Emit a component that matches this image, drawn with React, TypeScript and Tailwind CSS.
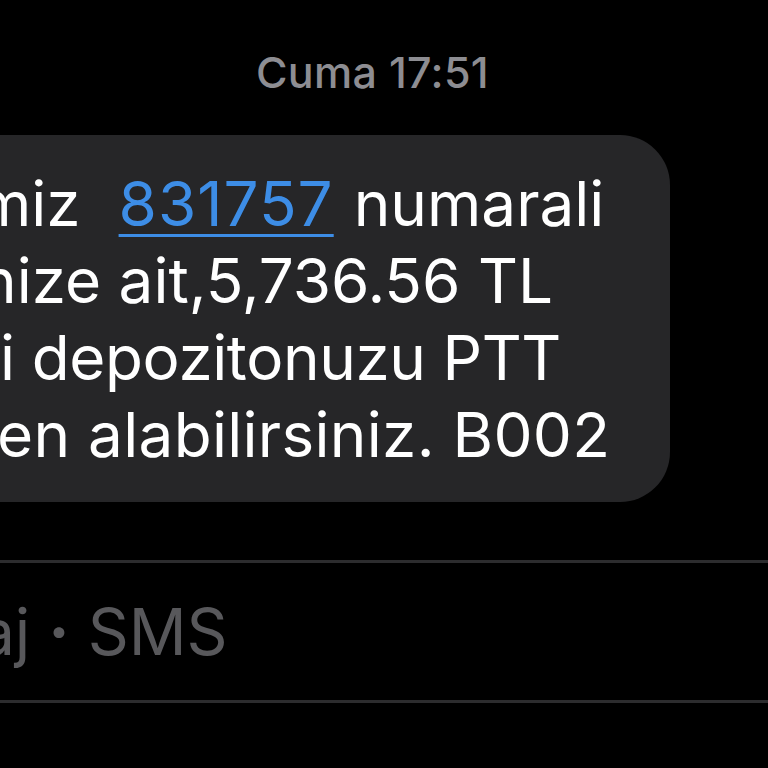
export default function App() {
  return (
    <div className="relative h-[768px] w-[768px] overflow-hidden bg-black font-['Inter','Liberation_Sans',sans-serif]">
      <div className="pt-[44px] pl-[256px] text-[43px] font-medium leading-[56px] tracking-[0.3px] text-[#8d8d92]">
        Cuma 17:51
      </div>

      <div className="mt-[35px] -ml-[60px] flex h-[367px] w-[730px] flex-col justify-center rounded-[50px] bg-[#262628] text-[62px] leading-[77px] text-white">
        <div className="ml-[37px] whitespace-nowrap">
          miz
          <span className="ml-[38px] tracking-[1px] text-[#3d8de6] underline decoration-[3px] underline-offset-[8px]">
            831757
          </span>
          <span className="ml-[20px]">numarali</span>
        </div>
        <div className="ml-[40px] whitespace-nowrap">nize ait,5,736.56 TL</div>
        <div className="ml-[60px] whitespace-nowrap tracking-[-0.4px]">i depozitonuzu PTT</div>
        <div className="ml-[57px] whitespace-nowrap tracking-[0.3px]">en alabilirsiniz. B002</div>
      </div>

      <div className="mt-[58px] flex h-[143px] items-center border-y-[3px] border-[#2c2c2e]">
        <div className="-ml-[150px] whitespace-nowrap text-[64px] text-[#58585b]">
          Mesaj <span className="font-bold">·</span> SMS
        </div>
      </div>
    </div>
  );
}
